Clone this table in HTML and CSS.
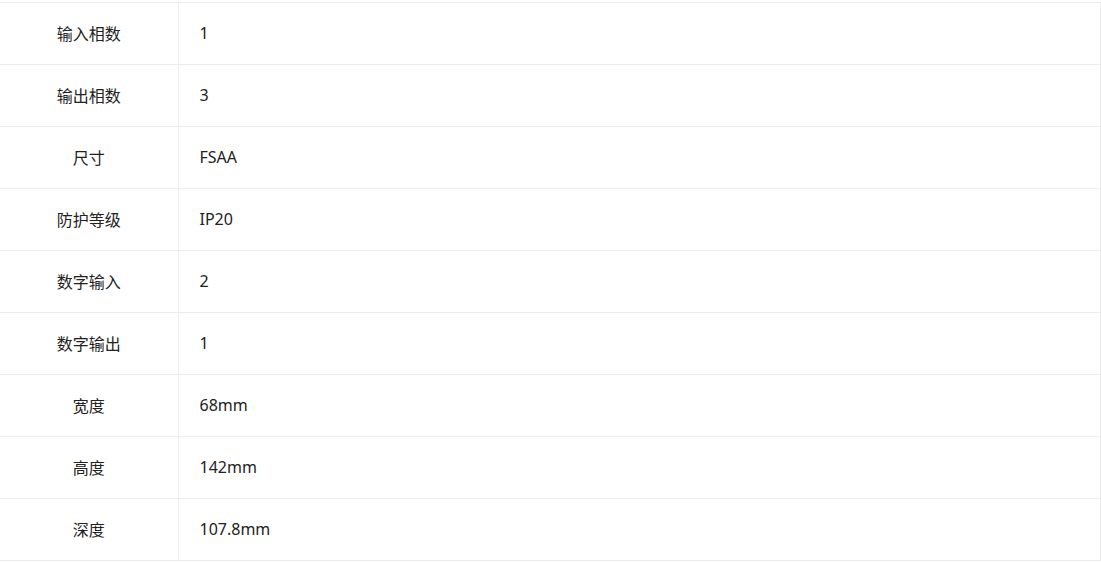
FILE: index.html
```html
<!DOCTYPE html>
<html lang="zh-CN">
<head>
<meta charset="utf-8">
<title>参数</title>
<link rel="stylesheet" href="styles.css">
</head>
<body>
<div class="wrap">
<table class="spec">
<tbody>
<tr><th>输入相数</th><td>1</td></tr>
<tr><th>输出相数</th><td>3</td></tr>
<tr><th>尺寸</th><td>FSAA</td></tr>
<tr><th>防护等级</th><td>IP20</td></tr>
<tr><th>数字输入</th><td>2</td></tr>
<tr><th>数字输出</th><td>1</td></tr>
<tr><th>宽度</th><td>68mm</td></tr>
<tr><th>高度</th><td>142mm</td></tr>
<tr><th>深度</th><td>107.8mm</td></tr>
</tbody>
</table>
</div>
</body>
</html>
```

FILE: styles.css
```css
html, body {
  margin: 0;
  padding: 0;
  background: #fff;
}
.wrap {
  padding-top: 2px;
}
.spec {
  width: 1101px;
  border-collapse: collapse;
  font-family: "Noto Sans", "Noto Sans CJK SC", sans-serif;
  font-size: 16px;
  line-height: 20px;
  color: #222;
}
.spec th, .spec td {
  box-sizing: border-box;
  height: 62px;
  padding: 0 0 2px 0;
  border-top: 1px solid #ececec;
  border-bottom: 1px solid #ececec;
  font-weight: normal;
  vertical-align: middle;
}
.spec th {
  width: 178px;
  text-align: center;
  border-right: 1px solid #ececec;
  font-family: "Noto Sans CJK SC", sans-serif;
}
.spec td {
  text-align: left;
  padding-left: 21px;
  border-right: 1px solid #ececec;
}
```
